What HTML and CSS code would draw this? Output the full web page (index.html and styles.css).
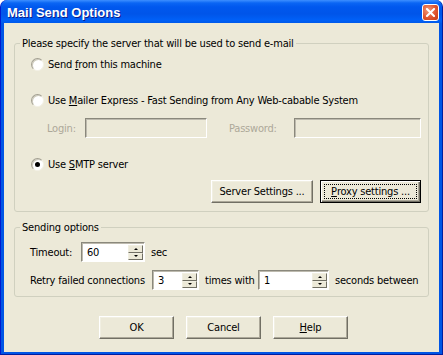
FILE: index.html
```html
<!DOCTYPE html>
<html>
<head>
<meta charset="utf-8">
<link rel="stylesheet" href="styles.css">
</head>
<body>
<div class="window">
  <div class="titlebar">
    <span class="title">Mail Send Options</span>
    <span class="close"><svg width="9" height="9" viewBox="0 0 9 9"><path d="M1 1 L8 8 M8 1 L1 8" stroke="#fff" stroke-width="2" stroke-linecap="square"/></svg></span>
  </div>
  <div class="client">
    <fieldset class="group g1">
      <legend>Please specify the server that will be used to send e-mail</legend>
      <div class="radio-row r1"><span class="radio"></span><span class="rtext">Send <u>f</u>rom this machine</span></div>
      <div class="radio-row r2"><span class="radio"></span><span class="rtext">Use <u>M</u>ailer Express - Fast Sending from Any Web-cabable System</span></div>
      <div class="login-row">
        <span class="dis login-lbl">Login:</span><span class="field f-login"></span>
        <span class="dis pw-lbl">Password:</span><span class="field f-pw"></span>
      </div>
      <div class="radio-row r3"><span class="radio checked"></span><span class="rtext">Use <u>S</u>MTP server</span></div>
      <div class="btn-row">
        <span class="btn b-server">Server Settings ...</span>
        <span class="btn b-proxy default"><span class="focus"><u>P</u>roxy settings ...</span></span>
      </div>
    </fieldset>
    <fieldset class="group g2">
      <legend>Sending options</legend>
      <div class="opt-row t-row">
        <span class="t-lbl">Timeout:</span>
        <span class="spin s-timeout"><span class="val">60</span><span class="arrows"><span class="arr up"></span><span class="arr down"></span></span></span>
        <span class="after">sec</span>
      </div>
      <div class="opt-row r-row">
        <span class="r-lbl">Retry failed connections</span>
        <span class="spin s-retry"><span class="val">3</span><span class="arrows"><span class="arr up"></span><span class="arr down"></span></span></span>
        <span class="after w-lbl">times with</span>
        <span class="spin s-sec"><span class="val">1</span><span class="arrows"><span class="arr up"></span><span class="arr down"></span></span></span>
        <span class="after">seconds between</span>
      </div>
    </fieldset>
    <div class="dlg-buttons">
      <span class="btn b-dlg">OK</span>
      <span class="btn b-dlg">Cancel</span>
      <span class="btn b-dlg"><u>H</u>elp</span>
    </div>
  </div>
</div>
</body>
</html>
```
FILE: styles.css
```css
html, body {
  margin: 0;
  padding: 0;
  background: #ffffff;
}
body {
  width: 443px;
  height: 355px;
  overflow: hidden;
}
.window {
  width: 443px;
  height: 355px;
  box-sizing: border-box;
  background: #0055e5;
  border-radius: 7px 7px 0 0;
  display: flex;
  flex-direction: column;
  border-left: 1px solid #0019cf;
  border-right: 1px solid #001ea0;
  border-bottom: 1px solid #001ea0;
  font-family: "DejaVu Sans Condensed", "DejaVu Sans", sans-serif;
  font-stretch: condensed;
  font-size: 11px;
  letter-spacing: -0.2px;
  color: #000;
  white-space: nowrap;
}
.titlebar {
  height: 23px;
  flex: none;
  display: flex;
  align-items: center;
  justify-content: space-between;
  padding: 0 3px 0 6px;
  border-radius: 7px 7px 0 0;
  background: linear-gradient(#3d8fff 0px, #0a66f4 3px, #0058ee 7px, #0055e9 14px, #0060f7 20px, #0059ea 23px);
}
.title {
  font-family: "Liberation Sans", sans-serif;
  font-weight: bold;
  font-size: 13px;
  letter-spacing: 0;
  color: #fff;
  text-shadow: 1px 1px 0 #0a1e8c;
  margin-top: 1px;
}
.close {
  width: 15px;
  height: 15px;
  border: 1px solid #fff;
  border-radius: 3px;
  background: radial-gradient(circle at 35% 35%, #f29a7a 0, #e0552f 55%, #c23a15 100%);
  display: flex;
  align-items: center;
  justify-content: center;
  margin-top: 2px;
}
.client {
  flex: 1;
  margin: 0 3px 2px 3px;
  background: #ece9d8;
  padding-top: 14px;
  display: flex;
  flex-direction: column;
}
.group {
  margin: 0 10px;
  padding: 0 7px 0 16px;
  border: 1px solid #d0d0bf;
  border-radius: 3px;
  min-width: 0;
}
.group legend {
  padding: 0 2px;
  margin-left: -11px;
  line-height: 13px;
  height: 13px;
}
.g1 { padding-bottom: 8px; }
.radio-row {
  display: flex;
  align-items: center;
  height: 13px;
}
.radio {
  width: 11px;
  height: 11px;
  border-radius: 50%;
  background: #fff;
  border: 1px solid;
  border-color: #a29f91 #f3f1e6 #f3f1e6 #a29f91;
  box-shadow: inset 1px 1px 0 #cfccbd;
  position: relative;
  flex: none;
}
.radio.checked::after {
  content: "";
  position: absolute;
  left: 3px;
  top: 3px;
  width: 5px;
  height: 5px;
  border-radius: 50%;
  background: #000;
}
.rtext {
  margin-left: 4px;
  line-height: 13px;
}
.r1 { margin-top: 8px; }
.r2 { margin-top: 23px; }
.login-row {
  display: flex;
  align-items: center;
  height: 20px;
  margin-top: 11px;
}
.dis { color: #aca899; }
.login-lbl { margin-left: 16px; width: 38px; }
.pw-lbl { margin-left: 22px; width: 65px; }
.field {
  height: 20px;
  box-sizing: border-box;
  border: 1px solid;
  border-color: #8a887c #ffffff #ffffff #8a887c;
  box-shadow: inset 1px 1px 0 #bdbaae;
  background: #ece9d8;
}
.f-login { width: 122px; }
.f-pw { width: 127px; }
.r3 { margin-top: 20px; }
.btn-row {
  display: flex;
  justify-content: flex-end;
  gap: 7px;
  margin-top: 9px;
}
.btn {
  height: 23px;
  box-sizing: border-box;
  display: flex;
  align-items: center;
  justify-content: center;
  background: #ece9d8;
  border: 1px solid;
  border-color: #ffffff #716f64 #716f64 #ffffff;
  box-shadow: inset -1px -1px 0 #aca899, inset 1px 1px 0 #f1efe2;
}
.b-server { width: 102px; }
.b-proxy { width: 101px; }
.btn.default {
  border: 1px solid #000;
  box-shadow: inset 1px 1px 0 #ffffff, inset -1px -1px 0 #716f64, inset -2px -2px 0 #aca899;
  align-items: stretch;
  padding: 3px;
}
.focus {
  flex: 1;
  border: 1px dotted #000;
  display: flex;
  align-items: center;
  justify-content: center;
}
.g2 {
  margin-top: 9px;
  padding-bottom: 6px;
  padding-left: 15px;
}
.g2 legend { margin-left: -10px; }
.opt-row {
  display: flex;
  align-items: center;
  height: 20px;
}
.t-row { margin-top: 8px; }
.r-row { margin-top: 8px; }
.t-lbl { width: 51px; }
.r-lbl { width: 122px; }
.after { margin-left: 6px; }
.w-lbl { width: 53px; }
.spin {
  height: 20px;
  box-sizing: border-box;
  display: flex;
  align-items: stretch;
  background: #fff;
  border: 1px solid;
  border-color: #8a887c #ffffff #ffffff #8a887c;
  box-shadow: inset 1px 1px 0 #bdbaae;
  padding: 2px 1px 1px 2px;
  flex: none;
}
.s-timeout { width: 64px; }
.s-retry { width: 47px; }
.s-sec { width: 71px; }
.val {
  flex: 1;
  padding-left: 3px;
  line-height: 15px;
}
.arrows {
  width: 15px;
  display: flex;
  flex-direction: column;
}
.arr {
  flex: 1;
  box-sizing: border-box;
  background: #ece9d8;
  border: 1px solid;
  border-color: #f1efe2 #716f64 #716f64 #f1efe2;
  display: flex;
  align-items: center;
  justify-content: center;
}
.arr::after {
  content: "";
  width: 0;
  height: 0;
  border-left: 2px solid transparent;
  border-right: 2px solid transparent;
}
.arr.up::after { border-bottom: 2px solid #000; }
.arr.down::after { border-top: 2px solid #000; }
.dlg-buttons {
  display: flex;
  gap: 12px;
  margin-top: 19px;
  margin-left: 95px;
}
.b-dlg { width: 75px; }
```
